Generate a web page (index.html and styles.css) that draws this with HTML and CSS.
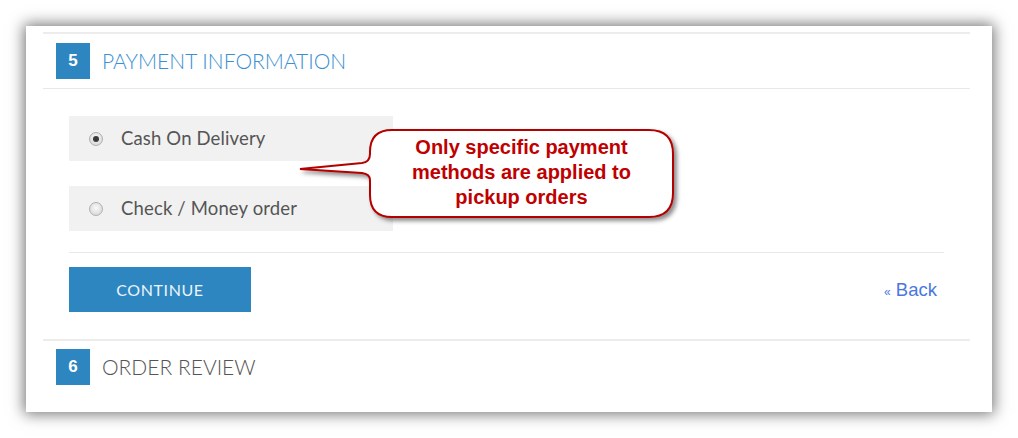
FILE: index.html
```html
<!DOCTYPE html>
<html>
<head>
<meta charset="utf-8">
<link rel="stylesheet" href="styles.css">
</head>
<body>
<div class="card">
  <section class="step">
    <div class="step-head">
      <span class="badge">5</span>
      <h2 class="step-title active">PAYMENT INFORMATION</h2>
    </div>
    <div class="step-body">
      <div class="methods">
        <label class="method"><span class="radio checked"></span><span class="method-name">Cash On Delivery</span></label>
        <label class="method"><span class="radio"></span><span class="method-name">Check / Money order</span></label>
      </div>
      <div class="actions">
        <button class="btn">CONTINUE</button>
        <a class="back" href="#"><span class="laquo">«</span> Back</a>
      </div>
    </div>
  </section>
  <section class="step last">
    <div class="step-head">
      <span class="badge">6</span>
      <h2 class="step-title">ORDER REVIEW</h2>
    </div>
  </section>

  <svg class="callout-shape" width="388" height="104" viewBox="0 0 388 104">
    <defs>
      <filter id="ds" x="-10%" y="-10%" width="120%" height="130%">
        <feDropShadow dx="3" dy="3" stdDeviation="2" flood-color="#000" flood-opacity="0.45"/>
      </filter>
    </defs>
    <path filter="url(#ds)" d="M96,4 H353 Q377,4 377,28 V67 Q377,91 353,91 H96 Q74,91 74,69 V54 Q74,48 66,47 L4,43 L66,37 Q74,36 74,28 V26 Q74,4 96,4 Z" fill="#fff" stroke="#b30000" stroke-width="2"/>
  </svg>
  <div class="callout-text">Only specific payment<br>methods are applied to<br>pickup orders</div>
</div>
</body>
</html>
```
FILE: styles.css
```css
html, body {
  margin: 0;
  padding: 0;
  background: #fff;
}
body {
  height: 438px;
  box-sizing: border-box;
  padding: 26px 0 0 26px;
  font-family: Lato, "Open Sans", sans-serif;
}
.card {
  position: relative;
  width: 966px;
  height: 386px;
  box-sizing: border-box;
  background: #fff;
  padding: 6px 22px 0 17px;
  box-shadow: 0 0 14px 2px rgba(0,0,0,0.55);
}
.step {
  border-top: 2px solid #ececec;
}
.step.last {
  margin-top: -1px;
}
.step-head {
  display: flex;
  align-items: center;
  height: 54px;
  padding-left: 13px;
  border-bottom: 1px solid #e8e8e8;
}
.step.last .step-head {
  border-bottom: none;
  height: 46px;
  align-items: flex-start;
  padding-top: 8px;
}
.badge {
  width: 34px;
  height: 36px;
  background: #2e86c1;
  color: #fff;
  font-family: "Liberation Sans", Arial, sans-serif;
  font-weight: bold;
  font-size: 17px;
  display: flex;
  align-items: center;
  justify-content: center;
}
.step-title {
  margin: -2px 0 0 12px;
  font-weight: 300;
  font-size: 21px;
  letter-spacing: 0;
  color: #555;
}
.step-title.active {
  color: #3b8fd2;
}
.step.last .step-title {
  line-height: 36px;
  margin-top: 0;
}
.step-body {
  padding: 27px 26px 28px 26px;
}
.methods {
  display: flex;
  flex-direction: column;
  gap: 25px;
  padding-bottom: 21px;
  border-bottom: 1px solid #e8e8e8;
}
.method {
  width: 324px;
  height: 45px;
  background: #f1f1f1;
  display: flex;
  align-items: center;
  padding-left: 20px;
  box-sizing: border-box;
}
.radio {
  width: 14px;
  height: 14px;
  border-radius: 50%;
  box-sizing: border-box;
  border: 1px solid #b0b0b0;
  background: radial-gradient(circle at 50% 40%, #fafafa, #d0d0d0);
  display: flex;
  align-items: center;
  justify-content: center;
}
.radio.checked::after {
  content: "";
  width: 6px;
  height: 6px;
  border-radius: 50%;
  background: #3a3a3a;
}
.method-name {
  margin-left: 18px;
  margin-top: -2px;
  font-size: 18.5px;
  letter-spacing: 0.15px;
  color: #555;
  font-weight: 400;
}
.actions {
  display: flex;
  align-items: center;
  justify-content: space-between;
  margin-top: 14px;
}
.btn {
  width: 182px;
  height: 45px;
  border: none;
  background: #2e86c1;
  color: #e9f4fb;
  font-family: Lato, sans-serif;
  font-size: 16px;
  letter-spacing: 0.6px;
  padding: 0;
}
.back {
  font-family: "Liberation Sans", Arial, sans-serif;
  font-size: 18.5px;
  color: #4a77df;
  text-decoration: none;
  margin-right: 7px;
}
.laquo {
  font-size: 12px;
}
.callout-shape {
  position: absolute;
  left: 270px;
  top: 100px;
}
.callout-text {
  position: absolute;
  left: 344px;
  top: 109px;
  width: 303px;
  text-align: center;
  font-family: "Liberation Sans", Arial, sans-serif;
  font-weight: bold;
  font-size: 20px;
  line-height: 25px;
  color: #c00000;
}
```
